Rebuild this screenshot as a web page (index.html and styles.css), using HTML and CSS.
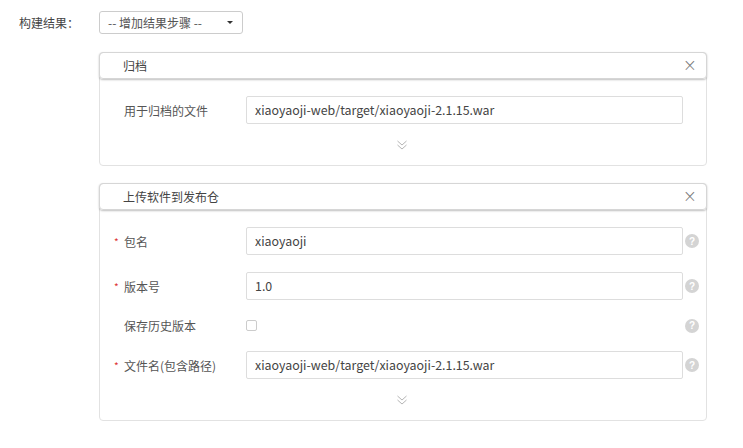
FILE: index.html
```html
<!DOCTYPE html>
<html lang="zh-CN">
<head>
    <meta charset="UTF-8">
    <title>构建结果</title>
    <link rel="stylesheet" href="styles.css">
</head>
<body>
<div id="wrap">
    <div class="top-row">
        <span class="top-label">构建结果：</span>
        <div class="select">
            <span>-- 增加结果步骤 --</span>
            <span class="caret"></span>
        </div>
    </div>

    <div class="steps">
        <!-- 归档 -->
        <div class="panel">
            <div class="panel-head">
                <span>归档</span>
                <span class="close">&times;</span>
            </div>
            <div class="panel-body">
                <div class="row">
                    <label class="lb">用于归档的文件</label>
                    <input type="text" class="ipt" value="xiaoyaoji-web/target/xiaoyaoji-2.1.15.war">
                </div>
                <div class="more">
                    <svg width="12" height="12" viewBox="0 0 12 12"><polyline points="1.5,2 6,6 10.5,2" fill="none" stroke="#b5b5b5" stroke-width="1"/><polyline points="1.5,6 6,10 10.5,6" fill="none" stroke="#b5b5b5" stroke-width="1"/></svg>
                </div>
            </div>
        </div>

        <!-- 上传软件到发布仓 -->
        <div class="panel">
            <div class="panel-head">
                <span>上传软件到发布仓</span>
                <span class="close">&times;</span>
            </div>
            <div class="panel-body">
                <div class="row">
                    <label class="lb req">包名</label>
                    <input type="text" class="ipt" value="xiaoyaoji">
                    <span class="help">?</span>
                </div>
                <div class="row">
                    <label class="lb req">版本号</label>
                    <input type="text" class="ipt" value="1.0">
                    <span class="help">?</span>
                </div>
                <div class="row row-check">
                    <label class="lb">保存历史版本</label>
                    <div class="check-wrap"><span class="check"></span></div>
                    <span class="help">?</span>
                </div>
                <div class="row">
                    <label class="lb req">文件名(包含路径)</label>
                    <input type="text" class="ipt" value="xiaoyaoji-web/target/xiaoyaoji-2.1.15.war">
                    <span class="help">?</span>
                </div>
                <div class="more">
                    <svg width="12" height="12" viewBox="0 0 12 12"><polyline points="1.5,2 6,6 10.5,2" fill="none" stroke="#b5b5b5" stroke-width="1"/><polyline points="1.5,6 6,10 10.5,6" fill="none" stroke="#b5b5b5" stroke-width="1"/></svg>
                </div>
            </div>
        </div>
    </div>
</div>
</body>
</html>
```

FILE: styles.css
```css
* {margin: 0; padding: 0; box-sizing: border-box;}

body {font-family: "Noto Sans CJK SC", "Noto Sans", sans-serif; font-size: 12px; color: #444; background: #fff;}

#wrap {width: 100%; padding-top: 11px;}

/* 상단 선택 */
.top-row {display: flex; align-items: center; height: 23px;}
.top-label {width: 99px; padding-left: 19px; color: #444;}
.select {width: 144px; height: 23px; border: 1px solid #ccc; border-radius: 3px;
    display: flex; align-items: center; justify-content: space-between; padding: 0 9px 0 8px; color: #555;}
.caret {width: 0; height: 0; border-left: 3px solid transparent; border-right: 3px solid transparent; border-top: 3px solid #333;}

.steps {margin: 18px 0 0 99px; width: 608px;}

/* 패널 */
.panel {border: 1px solid #e2e2e2; border-radius: 4px; margin-bottom: 17px;}
.panel-head {height: 27px; margin: -1px -1px 0 -1px; padding: 0 9px 0 23px; border: 1px solid #d6d6d6; border-radius: 4px;
    box-shadow: 0 1px 2px rgba(0,0,0,0.25); display: flex; align-items: center; justify-content: space-between; color: #444;}
.close {font-size: 17px; line-height: 1; color: #777; font-family: "DejaVu Sans", sans-serif; font-weight: 300;}
.panel-body {padding-top: 17px;}

.row {display: flex; align-items: center; height: 28px; margin-bottom: 17px;}
.row-check {height: 17px;}
.lb {width: 146px; padding-left: 24px; color: #555;}
.req::before {content: "*"; color: #d33; display: inline-block; width: 10px; margin-left: -10px; font-size: 10px; vertical-align: 1px;}
.ipt {width: 437px; height: 28px; border: 1px solid #ddd; border-radius: 2px; padding: 0 8px;
    font-family: "Noto Sans CJK SC", "Noto Sans", sans-serif; font-size: 12.4px; color: #444; outline: none;}
.check-wrap {width: 437px; display: flex; align-items: center;}
.check {width: 11px; height: 11px; border: 1px solid #ccc; border-radius: 2px; display: block;}
.help {width: 14px; height: 14px; margin-left: 2px; border-radius: 50%; background: #d4d4d4; color: #fff;
    font-size: 10px; font-weight: bold; font-family: "Liberation Sans", sans-serif;
    display: flex; align-items: center; justify-content: center;}

.more {height: 41px; margin-top: -17px; display: flex; align-items: center; justify-content: center; padding-right: 2px;}
```
